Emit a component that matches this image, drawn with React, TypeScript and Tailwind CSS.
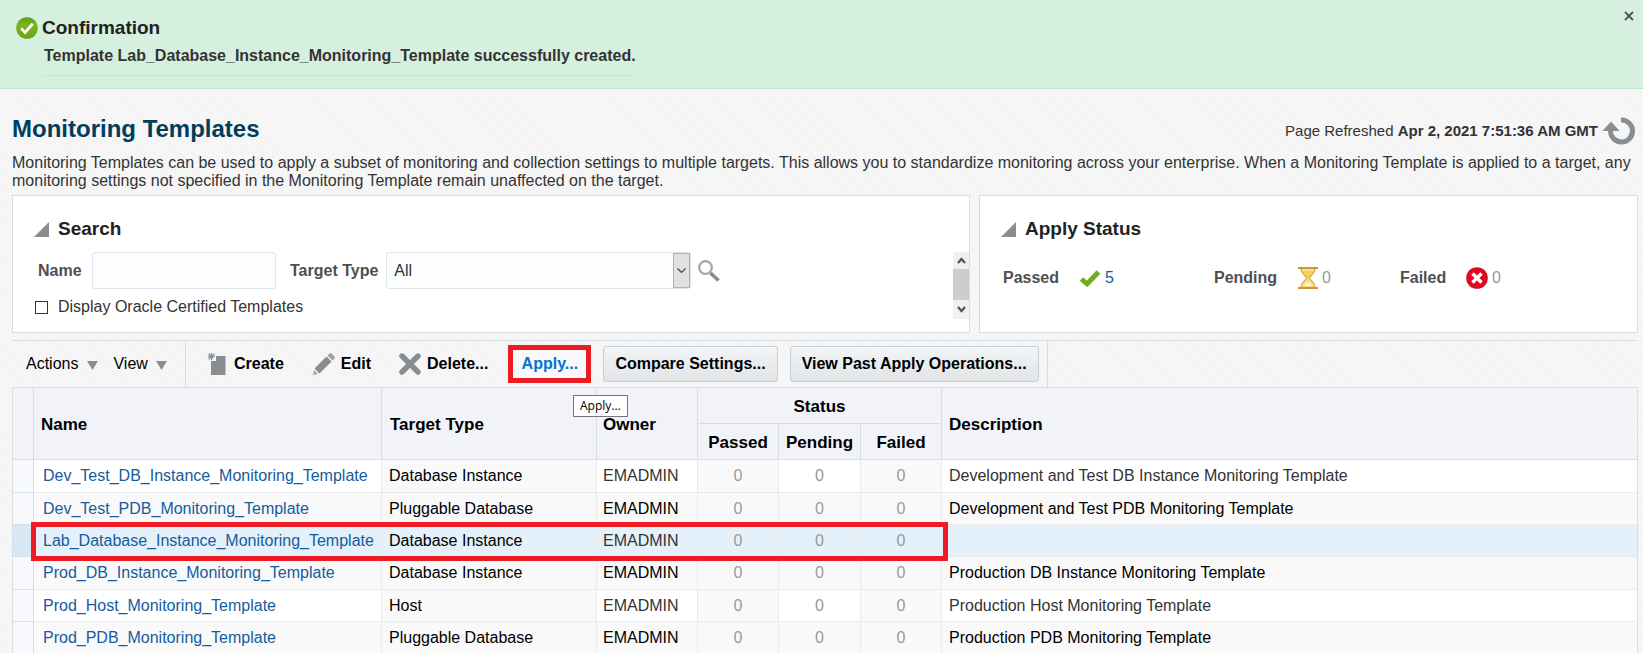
import type { ReactNode } from "react";

type Template = { name: string; type: string; description: string; selected?: boolean };

const templates: Template[] = [
  { name: "Dev_Test_DB_Instance_Monitoring_Template", type: "Database Instance", description: "Development and Test DB Instance Monitoring Template" },
  { name: "Dev_Test_PDB_Monitoring_Template", type: "Pluggable Database", description: "Development and Test PDB Monitoring Template" },
  { name: "Lab_Database_Instance_Monitoring_Template", type: "Database Instance", description: "", selected: true },
  { name: "Prod_DB_Instance_Monitoring_Template", type: "Database Instance", description: "Production DB Instance Monitoring Template" },
  { name: "Prod_Host_Monitoring_Template", type: "Host", description: "Production Host Monitoring Template" },
  { name: "Prod_PDB_Monitoring_Template", type: "Pluggable Database", description: "Production PDB Monitoring Template" },
];

function ConfirmIcon() {
  return (
    <svg width="22" height="22" viewBox="0 0 22 22" aria-hidden="true">
      <defs>
        <linearGradient id="confirm" x1="0" y1="0" x2="0" y2="1">
          <stop offset="0" stopColor="#5f9a16" />
          <stop offset="0.35" stopColor="#7ab51d" />
          <stop offset="1" stopColor="#6aa517" />
        </linearGradient>
      </defs>
      <circle cx="11" cy="11" r="10.8" fill="url(#confirm)" />
      <path d="M5.2 11.4l3.8 4L16.8 6.8" fill="none" stroke="#fff" strokeWidth="2.8" />
    </svg>
  );
}

function RefreshIcon() {
  return (
    <svg width="33" height="28" viewBox="0 0 33 28" aria-hidden="true">
      <path d="M19 3A11 11 0 1 1 8.6 12.5" fill="none" stroke="#878d90" strokeWidth="5" />
      <path d="M0.5 14L9 4.500l8.500 9.500z" fill="#878d90" />
    </svg>
  );
}

function Disclosure() {
  return (
    <svg width="15" height="15" viewBox="0 0 15 15" aria-hidden="true">
      <path d="M15 0v15H0z" fill="#878d90" />
    </svg>
  );
}

function MenuArrow() {
  return (
    <svg width="11" height="9" viewBox="0 0 11 9" className="mt-[3px]" aria-hidden="true">
      <path d="M0 0h11L5.500 9z" fill="#878d90" />
    </svg>
  );
}

function SearchIcon() {
  return (
    <svg width="22" height="22" viewBox="0 0 22 22" aria-hidden="true">
      <circle cx="7.500" cy="7.500" r="6.300" fill="none" stroke="#a3a7aa" strokeWidth="2.200" />
      <path d="M12.500 13l8 7.500" stroke="#878d90" strokeWidth="3.600" />
    </svg>
  );
}

function CreateIcon() {
  return (
    <svg width="18" height="22" viewBox="0 0 18 22" aria-hidden="true">
      <path d="M8 3h9.500v19H3V8h5z" fill="#878d90" />
      <circle cx="3.500" cy="3.500" r="2.200" fill="#878d90" />
      <path d="M3.500 0v1.500M3.500 5.500V7M0 3.500h1.500M5.500 3.500H7M.6 .6l1.400 1.400M6.400 .6L5 2M.6 6.400L2 5" stroke="#878d90" strokeWidth="1.300" />
    </svg>
  );
}

function EditIcon() {
  return (
    <svg width="22" height="22" viewBox="0 0 22 22" aria-hidden="true">
      <path d="M1.500 15.500L13.500 3.500l5 5-12 12z" fill="#878d90" />
      <path d="M14.500 2.500L16.500 .6q1-.8 2 0l3 3q.8 1 0 2L19.500 7.500z" fill="#9da2a4" />
      <path d="M1 17L5 21 0 22z" fill="#a3a7aa" />
    </svg>
  );
}

function DeleteIcon() {
  return (
    <svg width="22" height="22" viewBox="0 0 22 22" aria-hidden="true">
      <path d="M3 3l16 16M19 3L3 19" stroke="#878d90" strokeWidth="5.400" strokeLinecap="round" />
    </svg>
  );
}

function PassedIcon() {
  return (
    <svg width="22" height="20" viewBox="0 0 22 20" aria-hidden="true">
      <path d="M2.500 11l5.500 5L19.500 4" fill="none" stroke="#6fae1c" strokeWidth="5" strokeLinejoin="round" />
    </svg>
  );
}

function PendingIcon() {
  return (
    <svg width="20" height="22" viewBox="0 0 20 22" aria-hidden="true">
      <path d="M3 1.500c0 5 4 6 6 9.500-2 3.500-6 4.500-6 9.500h14c0-5-4-6-6-9.500 2-3.500 6-4.500 6-9.500z" fill="#fdf0c0" stroke="#e0b03a" strokeWidth="1.500" />
      <path d="M4.500 3.500h11L10 11zM10 12l-1.500 3L4 19.500h12L11.500 15z" fill="#f6cf55" />
      <path d="M10 14.500l4.500 4.500h-9z" fill="#fff6d8" />
      <path d="M0 1h20M0 21h20" stroke="#c79a35" strokeWidth="2" />
    </svg>
  );
}

function FailedIcon() {
  return (
    <svg width="22" height="22" viewBox="0 0 22 22" aria-hidden="true">
      <circle cx="11" cy="11" r="10.800" fill="#df0a22" />
      <path d="M6.500 6.500l9 9M15.500 6.500l-9 9" stroke="#fff" strokeWidth="3.400" />
    </svg>
  );
}

function Chevron({ up }: { up?: boolean }) {
  return (
    <svg width="9" height="7" viewBox="0 0 9 7" aria-hidden="true">
      <path d={up ? "M1 6l3.500-4L8 6" : "M1 1l3.500 4L8 1"} fill="none" stroke="#505050" strokeWidth="2.200" />
    </svg>
  );
}

function PanelTitle({ children }: { children: ReactNode }) {
  return (
    <h2 className="flex items-center gap-[9px] text-[19px] leading-6 font-bold text-[#222]">
      <button type="button" aria-label="Collapse" className="block">
        <Disclosure />
      </button>
      {children}
    </h2>
  );
}

const heading = "border-r border-b border-[#d6dfe6] bg-[#f1f3f8] pt-[2px] text-[17px] font-bold text-black";

export default function App() {
  return (
    <div className="h-screen overflow-hidden bg-[#f7f7f7] bg-[repeating-linear-gradient(45deg,#f3f3f3_0px,#f3f3f3_1px,#f8f8f8_2px,#f8f8f8_3px)] font-['Liberation_Sans',Arial,sans-serif] text-base text-[#333]">
      <section role="status" className="flex items-start justify-between border-b border-[#c0e8cc] bg-[#d6f0df] pt-4 pr-2 pb-3 pl-4">
        <div>
          <h2 className="flex items-center gap-1 text-[19px] leading-6 font-bold text-[#222]">
            <ConfirmIcon />
            Confirmation
          </h2>
          <p className="ml-[26px] border-b border-[#cfe0d8] pt-[6px] pb-[9px] pl-[2px] text-base leading-5 font-bold">
            Template Lab_Database_Instance_Monitoring_Template successfully created.
          </p>
        </div>
        <button type="button" aria-label="Close" className="-mt-[6px] flex size-3 items-center justify-center">
          <svg width="10" height="10" viewBox="0 0 10 10" aria-hidden="true">
            <path d="M1 1l8 8M9 1L1 9" stroke="#505050" strokeWidth="1.800" />
          </svg>
        </button>
      </section>

      <main className="pr-[5px] pl-3">
        <header className="flex items-end justify-between pt-6 pr-[3px]">
          <h1 className="text-2xl leading-8 font-bold text-[#003d5b]">Monitoring Templates</h1>
          <div className="flex items-center gap-1 text-[15px]">
            <span>
              Page Refreshed <b>Apr 2, 2021 7:51:36 AM GMT</b>
            </span>
            <button type="button" aria-label="Refresh">
              <RefreshIcon />
            </button>
          </div>
        </header>
        <p className="pt-[9px] pb-[5px] text-base leading-[18px]">
          Monitoring Templates can be used to apply a subset of monitoring and collection settings to multiple targets. This allows you to standardize monitoring across your enterprise. When a Monitoring Template is applied to a target, any monitoring settings not specified in the Monitoring Template remain unaffected on the target.
        </p>

        <div className="grid grid-cols-[958fr_659fr] gap-[9px]">
          <section className="h-[138px] border border-[#d6dfe6] bg-white pt-[21px] pl-[21px]">
            <PanelTitle>Search</PanelTitle>
            <div className="mt-[11px] flex justify-between">
              <div>
                <div className="flex items-center">
                  <label htmlFor="name" className="w-[58px] pl-1 font-bold text-[#4f4f4f]">Name</label>
                  <input id="name" type="text" className="h-[37px] w-[184px] rounded-[3px] border border-[#dfe6ea] bg-[#fcfdfe] px-2" />
                  <label htmlFor="type" className="mr-2 ml-[14px] font-bold text-[#4f4f4f]">Target Type</label>
                  <div className="flex h-[37px] w-[305px] rounded-[3px] border border-[#dfe6ea] bg-[#fcfdfe]">
                    <select id="type" className="min-w-0 flex-1 appearance-none bg-transparent pl-[7px]">
                      <option>All</option>
                    </select>
                    <span className="pointer-events-none flex w-[17px] items-center justify-center border border-[#adb2b5] bg-[#e1e1e1]">
                      <svg width="9" height="6" viewBox="0 0 9 6" aria-hidden="true">
                        <path d="M.5 .5l4 4 4-4" fill="none" stroke="#444" strokeWidth="1.200" />
                      </svg>
                    </span>
                  </div>
                  <button type="button" aria-label="Search" className="ml-[7px]">
                    <SearchIcon />
                  </button>
                </div>
                <label className="mt-2 flex items-center gap-[10px] pl-px leading-5">
                  <input type="checkbox" className="size-[13px] appearance-none border border-[#333] bg-white" />
                  Display Oracle Certified Templates
                </label>
              </div>
              <div className="flex h-[67px] w-4 flex-col items-center bg-[#f0f0f0]">
                <button type="button" aria-label="Scroll up" className="flex h-[17px] w-full items-center justify-center"><Chevron up /></button>
                <span className="h-[31px] w-full bg-[#cdcdcd]" />
                <button type="button" aria-label="Scroll down" className="flex h-[19px] w-full items-center justify-center"><Chevron /></button>
              </div>
            </div>
          </section>

          <section className="h-[138px] border border-[#d6dfe6] bg-white pt-[21px] pl-[21px]">
            <PanelTitle>Apply Status</PanelTitle>
            <dl className="mt-[25px] flex items-center text-base leading-6">
              <dt className="w-[78px] pl-[2px] font-bold text-[#4f4f4f]">Passed</dt>
              <dd className="flex w-[135px] items-center gap-1"><PassedIcon /><a href="#passed" className="text-[#145c9e]">5</a></dd>
              <dt className="w-[84px] font-bold text-[#4f4f4f]">Pending</dt>
              <dd className="flex w-[102px] items-center gap-1 text-[#999]"><PendingIcon />0</dd>
              <dt className="w-[66px] font-bold text-[#4f4f4f]">Failed</dt>
              <dd className="flex items-center gap-1 text-[#999]"><FailedIcon />0</dd>
            </dl>
          </section>
        </div>

        <div className="relative mt-[7px] flex h-[47px] items-stretch border-t border-[#d6dfe6] text-black">
          <div className="flex w-[174px] items-center gap-[15px] border-r border-[#d6dfe6] pl-[14px]">
            <button type="button" className="flex items-center gap-[9px]">Actions <MenuArrow /></button>
            <button type="button" className="flex items-center gap-2">View <MenuArrow /></button>
          </div>
          <div className="flex items-center border-r border-[#d6dfe6] pr-2 pl-[22px] text-base font-bold">
            <button type="button" className="flex items-center gap-2"><CreateIcon />Create</button>
            <button type="button" className="ml-[29px] flex items-center gap-[6px]"><EditIcon />Edit</button>
            <button type="button" className="ml-7 flex items-center gap-[6px]"><DeleteIcon />Delete...</button>
            <button type="button" title="Apply..." className="ml-5 h-[38px] w-[83px] border-[5px] border-[#ed1c24] bg-[#f7f9fb] text-[#0572ce]">Apply...</button>
            <button type="button" className="ml-3 h-9 rounded-[3px] border border-[#c4ced7] bg-linear-to-b from-[#f2f4f6] to-[#e2e5e8] px-[11px]">Compare Settings...</button>
            <button type="button" className="ml-3 h-9 rounded-[3px] border border-[#c4ced7] bg-linear-to-b from-[#f2f4f6] to-[#e2e5e8] px-[11px]">View Past Apply Operations...</button>
          </div>
          <div role="tooltip" className="absolute top-[54px] left-[561px] z-10 flex h-[22px] items-center border border-[#767676] bg-white px-[6px] font-['Open_Sans','Noto_Sans',sans-serif] text-xs">Apply...</div>
        </div>

        <div className="relative">
          <table className="w-full table-fixed border-separate border-spacing-0 border-t border-l border-[#d6dfe6] text-left">
            <colgroup>
              <col className="w-[21px]" />
              <col className="w-[348px]" />
              <col className="w-[215px]" />
              <col className="w-[101px]" />
              <col className="w-[81px]" />
              <col className="w-[82px]" />
              <col className="w-[81px]" />
              <col />
            </colgroup>
            <thead>
              <tr className="h-9">
                <th rowSpan={2} className={heading} aria-label="Select" />
                <th rowSpan={2} className={`${heading} px-[7px]`}>Name</th>
                <th rowSpan={2} className={`${heading} px-2`}>Target Type</th>
                <th rowSpan={2} className={`${heading} px-[6px]`}>Owner</th>
                <th colSpan={3} className={`${heading} text-center`}>Status</th>
                <th rowSpan={2} className={`${heading} px-[7px]`}>Description</th>
              </tr>
              <tr className="h-9">
                <th className={`${heading} text-center`}>Passed</th>
                <th className={`${heading} text-center`}>Pending</th>
                <th className={`${heading} text-center`}>Failed</th>
              </tr>
            </thead>
            <tbody>
              {templates.map((t, i) => {
                const even = i % 2 === 1;
                const base = "border-r border-b border-[#ebebeb] ";
                const plain = base + (t.selected ? "bg-[#e4f0fa]" : even ? "bg-[#f9f9f9]" : "bg-white");
                const shaded = base + (t.selected ? "bg-[#e4f0fa]" : "bg-[#f9f9f9]");
                const ink = even ? "text-black" : "text-[#333]";
                return (
                  <tr key={t.name} className="h-8 leading-5 nth-[3n+1]:h-[33px]">
                    <td className={`border-r border-b border-[#d6dfe6] ${t.selected ? "bg-[#d9e7f5]" : "bg-[#f7f9fd]"}`} />
                    <td className={`${plain} px-[9px]`}><a href="#template" className="text-[#145c9e]">{t.name}</a></td>
                    <td className={`${shaded} px-[7px] text-black`}>{t.type}</td>
                    <td className={`${plain} px-[6px] ${ink}`}>EMADMIN</td>
                    <td className={`${shaded} text-center text-[#999]`}>0</td>
                    <td className={`${plain} text-center text-[#999]`}>0</td>
                    <td className={`${shaded} text-center text-[#999]`}>0</td>
                    <td className={`${plain} border-r-[#d6dfe6] px-[7px] ${ink}`}>{t.description}</td>
                  </tr>
                );
              })}
            </tbody>
          </table>
          <div className="pointer-events-none absolute top-[135px] left-[19px] h-[39px] w-[917px] border-[5px] border-[#ed1c24]" />
        </div>
      </main>
    </div>
  );
}
